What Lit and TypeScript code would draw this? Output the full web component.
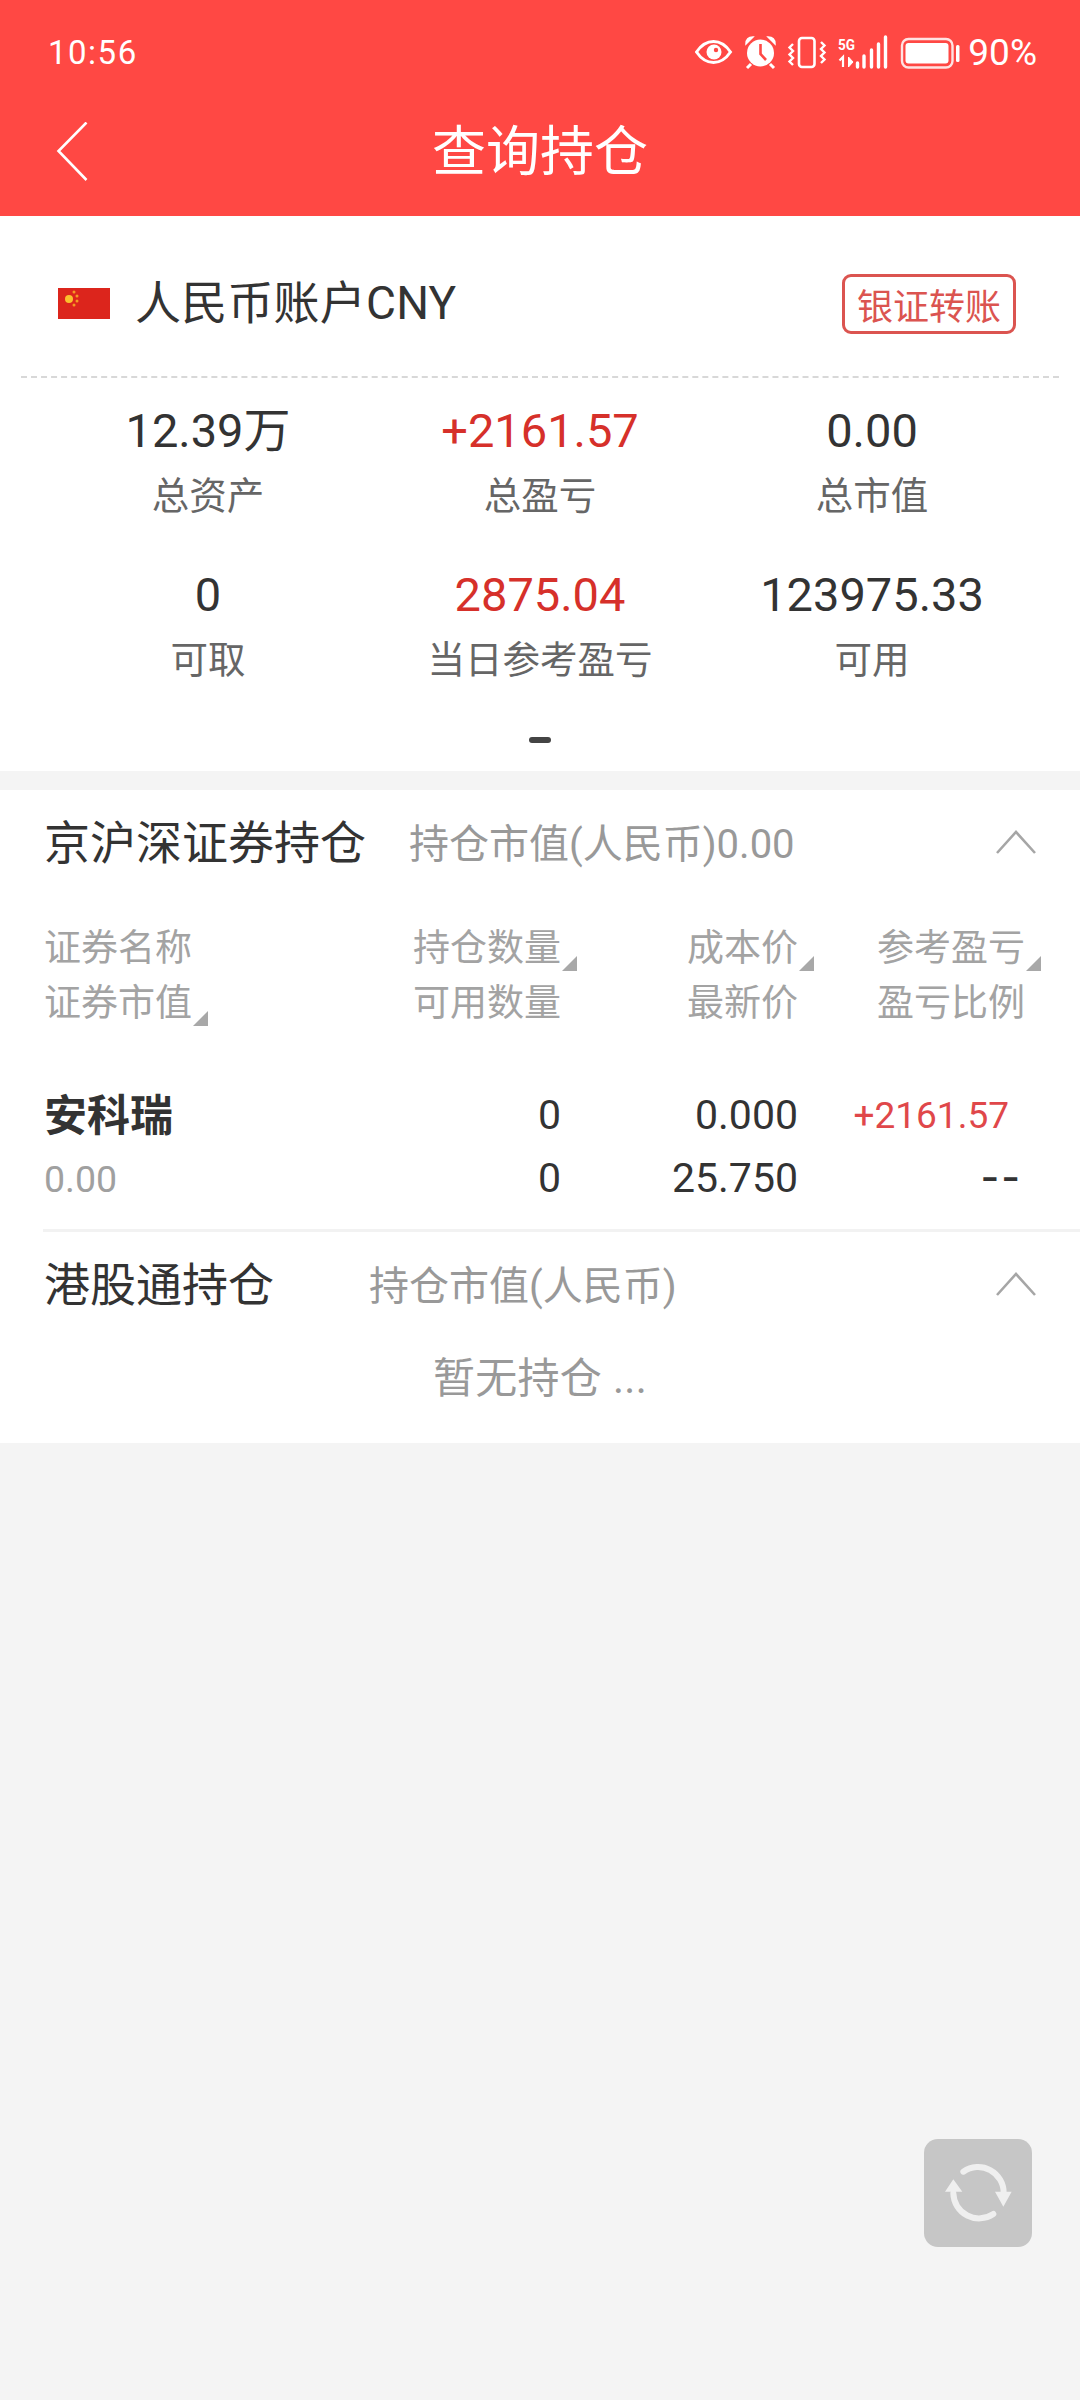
import { LitElement, html, css } from "lit";
import { customElement } from "lit/decorators.js";

const stats = [
  ["12.39万", "总资产", false],
  ["+2161.57", "总盈亏", true],
  ["0.00", "总市值", false],
  ["0", "可取", false],
  ["2875.04", "当日参考盈亏", true],
  ["123975.33", "可用", false],
] as const;

const chevUp = html`<svg class="chev" width="40" height="24" viewBox="0 0 40 24"><path d="M1 23 L20 2 L39 23" fill="none" stroke="#a6a6a6" stroke-width="2.6"/></svg>`;
const tri = html`<i class="tri"></i>`;

@customElement("app-root")
export class AppRoot extends LitElement {
  static styles = css`
    :host { display: block; width: 1080px; height: 2400px; background: #f4f4f4; position: relative; overflow: hidden;
      font-family: "Roboto", "Noto Sans CJK SC", sans-serif; }
    .head { background: #ff4844; height: 216px; color: #fff; display: flex; flex-direction: column; }
    .status { height: 104px; padding: 0 43px 0 48px; display: flex; align-items: center; justify-content: space-between; box-sizing: border-box; }
    .time { font-size: 33px; letter-spacing: 1.5px; }
    .icons { display: flex; align-items: center; }
    .pct { font-size: 37px; margin-left: 8px; }
    .nav { height: 92px; position: relative; display: flex; align-items: center; justify-content: center; padding-bottom: 6px; box-sizing: border-box; }
    .title { font-size: 54px; font-weight: 400; }
    .back { position: absolute; left: 55px; top: 18px; }

    .acct { background: #fff; height: 555px; display: flex; flex-direction: column; }
    .acct-top { height: 160px; padding: 15px 42px 0 58px; display: flex; align-items: center; box-sizing: border-box; }
    .flag { width: 52px; height: 31px; margin-right: 25px; display: block; }
    .acct-name { font-size: 46px; letter-spacing: .2px; color: #333; flex: 1; padding-bottom: 10px; }
    .btn { border: 3px solid #db5450; border-radius: 9px; color: #db5450; font-size: 36px; width: 174px; height: 60px; display: flex; align-items: center; justify-content: center; box-sizing: border-box; margin-right: 22px; }
    .dash { margin: 0 21px; border-top: 2px dashed #d8d8d8; }
    .grid { display: grid; grid-template-columns: repeat(3, 332px); justify-content: center; padding-top: 24px; }
    .stat { height: 164px; display: flex; flex-direction: column; align-items: center; }
    .v { font-size: 47px; color: #333; line-height: 60px; padding-bottom: 1px; margin-top: -1px; }
    .v.red { color: #d6302a; }
    .l { font-size: 37.5px; color: #666; line-height: 50px; margin-top: 9px; }
    .dot { width: 22px; height: 6px; border-radius: 3px; background: #444; margin: 7px auto 0; }

    .hold { background: #fff; margin-top: 19px; display: flex; flex-direction: column; padding-bottom: 21px; }
    .sec { display: flex; align-items: center; height: 104px; padding: 0 0 0 44px; position: relative; }
    .sec-t { font-size: 46px; color: #333; padding-bottom: 6px; }
    .sec-t.a { width: 366px; }
    .sec-t.b { width: 326px; }
    .sec-s { font-size: 40px; color: #999; padding-bottom: 3px; margin-left: -1px; }
    .chev { position: absolute; left: 996px; top: 40px; }

    .table { padding: 27px 0 0 44px; }
    .row { display: grid; grid-template-columns: 369px 148px 237px 1fr; }
    .th { font-size: 37px; color: #a3a3a3; line-height: 55px; }
    .th.c3 { text-align: right; }
    .th.c4 { padding-left: 79px; }
    .th > span { position: relative; display: inline-block; }
    .tri { position: absolute; right: -16px; bottom: 5px; width: 0; height: 0; border-left: 15px solid transparent; border-bottom: 15px solid #a8a8a8; }
    .data { height: 65px; align-items: center; }
    .data.first { margin-top: 50px; }
    .name { font-size: 43px; font-weight: 700; color: #333; padding-bottom: 7px; }
    .num { font-size: 41px; color: #333; text-align: right; padding-bottom: 2px; }
    .gain { font-size: 37px; color: #e0474a; text-align: right; padding-right: 71px; }
    .dashes { font-family: "Liberation Mono", monospace; font-size: 48px; letter-spacing: -8px; color: #333; text-align: right; padding-right: 63px; }
    .sub { font-size: 37.5px; color: #a0a0a0; }
    .hr { height: 3px; background: #f2f2f2; margin: 18px 0 0 43px; }
    .empty { font-size: 42px; color: #999; text-align: center; height: 86px; line-height: 86px; letter-spacing: .3px; }
    .fab { position: absolute; left: 924px; top: 2139px; width: 108px; height: 108px; background: #c6c6c6; border-radius: 14px; }
    .fab svg { display: block; }
  `;

  render() {
    return html`
      <div class="head">
        <div class="status">
          <div class="time">10:56</div>
          <div class="icons">
            <svg width="265" height="36" viewBox="695 34 265 36" fill="none" stroke="#fff">
              <path d="M696.5 52 C706 38 721 38 730.5 52 C721 66 706 66 696.5 52Z" stroke-width="3"/>
              <circle cx="714" cy="52" r="7.5" fill="#fff" stroke="none"/><circle cx="716" cy="50" r="2.2" fill="#ff4844" stroke="none"/>
              <circle cx="760.5" cy="53" r="13.5" fill="#fff" stroke="none"/>
              <path d="M760.5 44V54L766 60" stroke="#ff4844" stroke-width="2.6"/>
              <path d="M746 44 C746 39 749 37 753 37 Z M775 44 C775 39 772 37 768 37 Z" fill="#fff" stroke-width="1.5"/>
              <path d="M751 64l-4 4M770 64l4 4" stroke-width="3"/>
              <rect x="799" y="38" width="15.5" height="29" rx="3" stroke-width="2.6"/>
              <path d="M793 44l-3.5 3.5 3.5 3.5-3.5 3.5 3.5 3.5-3.5 3.5 3.5 3.5M821 42l3.5 3.5-3.5 3.5 3.5 3.5-3.5 3.5 3.5 3.5-3.5 3.5" stroke-width="2.4"/>
              <text x="838" y="50" font-size="15" font-family="Roboto" font-weight="700" fill="#fff" stroke="none" textLength="17" lengthAdjust="spacingAndGlyphs">5G</text>
              <path d="M843 67V57l-3.5 3.5" stroke-width="2.2"/><path d="M848.5 57v10l4.5-5z" fill="#fff" stroke-width="1"/>
              <path d="M857.5 63v4M864 56v11M871.5 50v17M878.5 44v23M885.5 37v30" stroke-width="3.4" stroke-linecap="round"/>
              <rect x="902" y="39" width="50.5" height="28.5" rx="6.5" stroke-width="2.4" opacity=".85"/>
              <rect x="905.5" y="43" width="43" height="20.5" rx="3" fill="#fff" stroke="none"/>
              <rect x="956" y="45" width="3.5" height="17" rx="1.5" fill="#fff" stroke="none"/>
            </svg>
            <div class="pct">90%</div>
          </div>
        </div>
        <div class="nav">
          <svg class="back" width="34" height="60" viewBox="0 0 34 60"><path d="M31.5 0.5 L3.5 29 L31.5 58" fill="none" stroke="#fff" stroke-width="2.6"/></svg>
          <div class="title">查询持仓</div>
        </div>
      </div>

      <div class="acct">
        <div class="acct-top">
          <svg class="flag" viewBox="0 0 52 31">
            <rect width="52" height="31" fill="#dc251c"/>
            <circle cx="11" cy="11" r="4" fill="#fbc02d"/>
            <circle cx="16" cy="4" r="1.5" fill="#f59a23"/><circle cx="19" cy="8" r="1.5" fill="#f59a23"/><circle cx="19" cy="13" r="1.5" fill="#f59a23"/><circle cx="16" cy="17" r="1.5" fill="#f59a23"/>
          </svg>
          <div class="acct-name">人民币账户CNY</div>
          <div class="btn">银证转账</div>
        </div>
        <div class="dash"></div>
        <div class="grid">
          ${stats.map(([v, l, red]) => html`<div class="stat"><div class="v ${red ? "red" : ""}">${v}</div><div class="l">${l}</div></div>`)}
        </div>
        <div class="dot"></div>
      </div>

      <div class="hold">
        <div class="sec">
          <div class="sec-t a">京沪深证券持仓</div>
          <div class="sec-s">持仓市值(人民币)0.00</div>
          ${chevUp}
        </div>
        <div class="table">
          <div class="row">
            <div class="th">证券名称</div>
            <div class="th"><span>持仓数量${tri}</span></div>
            <div class="th c3"><span>成本价${tri}</span></div>
            <div class="th c4"><span>参考盈亏${tri}</span></div>
          </div>
          <div class="row">
            <div class="th"><span>证券市值${tri}</span></div>
            <div class="th">可用数量</div>
            <div class="th c3">最新价</div>
            <div class="th c4">盈亏比例</div>
          </div>
          <div class="row data first">
            <div class="name">安科瑞</div><div class="num">0</div><div class="num">0.000</div><div class="gain">+2161.57</div>
          </div>
          <div class="row data">
            <div class="sub">0.00</div><div class="num">0</div><div class="num">25.750</div><div class="dashes">--</div>
          </div>
        </div>
        <div class="hr"></div>
        <div class="sec">
          <div class="sec-t b">港股通持仓</div>
          <div class="sec-s">持仓市值(人民币)</div>
          ${chevUp}
        </div>
        <div class="empty">暂无持仓 ...</div>
      </div>
      <div class="fab">
        <svg width="108" height="108" viewBox="72 57 324 324" fill="none" stroke="#efefef" stroke-width="18" stroke-linecap="round">
          <path d="M190 155 A77 77 0 0 1 311 220"/>
          <path d="M160 220 A77 77 0 0 0 280 282"/>
          <path d="M285 215 H335 L310 260Z M135 215 H187 L160 178Z" fill="#efefef" stroke="none"/>
        </svg>
      </div>
    `;
  }
}
